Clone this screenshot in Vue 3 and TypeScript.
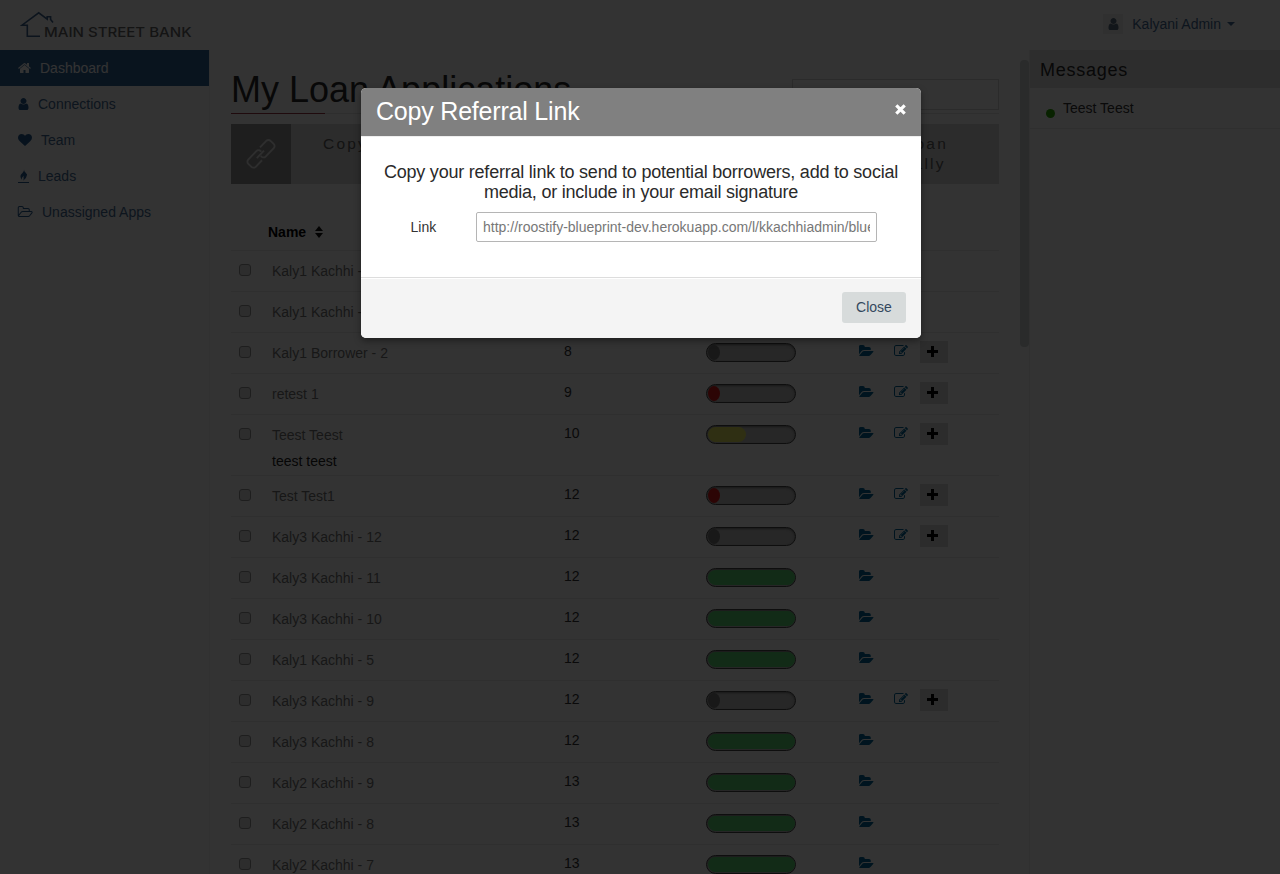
<script setup lang="ts">
interface Loan { name: string; co?: string; days: number; status: 'idle' | 'red' | 'yellow' | 'green' }

const icons = {
  home: 'M1472 992v480q0 26-19 45t-45 19h-384v-384h-256v384h-384q-26 0-45-19t-19-45v-480q0-1 .5-3t.5-3l575-474 575 474q1 2 1 6zm223-69l-62 74q-8 9-21 11h-3q-13 0-21-7l-692-577-692 577q-12 8-24 7-13-2-21-11l-62-74q-8-10-7-23.5t11-21.5l719-599q32-26 76-26t76 26l244 204v-195q0-14 9-23t23-9h192q14 0 23 9t9 23v408l219 182q10 8 11 21.5t-7 23.5z',
  user: 'M1536 1399q0 109-62.5 187t-150.5 78h-854q-88 0-150.5-78t-62.5-187q0-85 8.5-160.5t31.5-152 58.5-131 94-89 134.5-34.5q131 128 313 128t313-128q76 0 134.5 34.5t94 89 58.5 131 31.5 152 8.5 160.5zm-256-887q0 159-112.5 271.5t-271.5 112.5-271.5-112.5-112.5-271.5 112.5-271.5 271.5-112.5 271.5 112.5 112.5 271.5z',
  heart: 'M896 1664q-26 0-44-18l-624-602q-10-8-27.5-26t-55.5-65.5-68-97.5-53.5-121-23.5-138q0-220 127-344t351-124q62 0 126.5 21.5t120 58 95.5 68.5 76 68q36-36 76-68t95.5-68.5 120-58 126.5-21.5q224 0 351 124t127 344q0 221-229 450l-623 600q-18 18-44 18z',
  fire: 'M192 1664H1600V1792H192zM960 40Q940 300 1200 500T1310 850Q1300 1180 850 1500Q960 1280 900 1130Q860 1030 960 860Q720 1000 690 1170Q680 1310 740 1440Q480 1200 500 900Q520 690 760 510T960 40z',
  folderO: 'M1717 931q0-35-53-35h-1088q-40 0-85.5 21.5t-71.5 52.5l-294 363q-18 24-18 40 0 35 53 35h1088q40 0 86-22t71-53l294-363q18-22 18-39zm-1141-163h768v-160q0-40-28-68t-68-28h-576q-40 0-68-28t-28-68v-64q0-40-28-68t-68-28h-320q-40 0-68 28t-28 68v853l256-315q44-53 116-87.5t140-34.5zm1269 163q0 62-46 120l-295 363q-43 53-116 87.5t-140 34.5h-1088q-92 0-158-66t-66-158v-960q0-92 66-158t158-66h320q92 0 158 66t66 158v32h544q92 0 158 66t66 158v160h192q54 0 99 24.5t67 70.5q15 32 15 68z',
  folder: 'M1815 952q0 31-31 66l-336 396q-43 51-120.5 86.5t-143.5 35.5h-1088q-34 0-60.5-13t-26.5-43q0-31 31-66l336-396q43-51 120.5-86.5t143.5-35.5h1088q34 0 60.5 13t26.5 43zm-343-344v160h-832q-94 0-197 47.5t-164 119.5l-337 396-5 6q0-4-.5-12.5t-.5-12.5v-960q0-92 66-158t158-66h320q92 0 158 66t66 158v32h544q92 0 158 66t66 158z',
  edit: 'M888 1184l116-116-152-152-116 116v56h96v96h56zm440-720q-16-16-33 1l-350 350q-17 17-1 33t33-1l350-350q17-17 1-33zm80 594v190q0 119-84.5 203.5t-203.5 84.5h-832q-119 0-203.5-84.5t-84.5-203.5v-832q0-119 84.5-203.5t203.5-84.5h832q63 0 117 25 15 7 18 23 3 17-9 29l-49 49q-14 14-32 8-23-6-45-6h-832q-66 0-113 47t-47 113v832q0 66 47 113t113 47h832q66 0 113-47t47-113v-126q0-13 9-22l64-64q15-15 35-7t20 29zm-96-738l288 288-672 672h-288v-288zm444 132l-92 92-288-288 92-92q28-28 68-28t68 28l152 152q28 28 28 68t-28 68z',
}

const nav = [
  { label: 'Dashboard', icon: icons.home, box: '64 0 1664 1792', w: 13 },
  { label: 'Connections', icon: icons.user, box: '256 0 1280 1792', w: 11 },
  { label: 'Team', icon: icons.heart, box: '0 0 1792 1792', w: 14 },
  { label: 'Leads', icon: icons.fire, box: '192 0 1408 1792', w: 11 },
  { label: 'Unassigned Apps', icon: icons.folderO, box: '0 0 1856 1792', w: 15 },
]

const loans: Loan[] = [
  { name: 'Kaly1 Kachhi - 3', days: 7, status: 'green' },
  { name: 'Kaly1 Kachhi - 4', days: 8, status: 'green' },
  { name: 'Kaly1 Borrower - 2', days: 8, status: 'idle' },
  { name: 'retest 1', days: 9, status: 'red' },
  { name: 'Teest Teest', co: 'teest teest', days: 10, status: 'yellow' },
  { name: 'Test Test1', days: 12, status: 'red' },
  { name: 'Kaly3 Kachhi - 12', days: 12, status: 'idle' },
  { name: 'Kaly3 Kachhi - 11', days: 12, status: 'green' },
  { name: 'Kaly3 Kachhi - 10', days: 12, status: 'green' },
  { name: 'Kaly1 Kachhi - 5', days: 12, status: 'green' },
  { name: 'Kaly3 Kachhi - 9', days: 12, status: 'idle' },
  { name: 'Kaly3 Kachhi - 8', days: 12, status: 'green' },
  { name: 'Kaly2 Kachhi - 9', days: 13, status: 'green' },
  { name: 'Kaly2 Kachhi - 8', days: 13, status: 'green' },
  { name: 'Kaly2 Kachhi - 7', days: 13, status: 'green' },
]
const link = 'http://roostify-blueprint-dev.herokuapp.com/l/kkachhiadmin/blueprint'
</script>

<template>
  <div class="screen">
    <header class="topbar">
      <svg class="logo" width="172" height="30" viewBox="0 0 172 30">
        <path class="house" d="M20 26.2H7.300V15.200H2L18.700 2.800 27.200 9.200V6.800H30.600V9.500L33 12.500" />
        <text x="24" y="27" textLength="147.500" lengthAdjust="spacingAndGlyphs">MAIN STREET BANK</text>
      </svg>
      <div class="account">
        <span class="avatar"><svg width="11" height="14" viewBox="256 0 1280 1792"><path :d="icons.user" /></svg></span>
        <span>Kalyani Admin</span><i class="caret" />
      </div>
    </header>
    <div class="columns">
      <nav class="sidebar">
        <a v-for="(n, i) in nav" :key="n.label" class="item" :class="{ active: i === 0 }">
          <svg :width="n.w" height="14" :viewBox="n.box"><path :d="n.icon" /></svg>
          <span>{{ n.label }}</span>
        </a>
      </nav>
      <main class="main">
        <div class="heading"><h1>My Loan Applications</h1><div class="search" /></div>
        <div class="tiles">
          <div class="tile">
            <div class="square">
              <svg width="26" height="27.700" viewBox="0 0 30 32"><g transform="rotate(-46 15 16)"><path d="M17 14.500V13.500A3.500 3.500 0 0 0 13.500 10H0A3.500 3.500 0 0 0 -3.500 13.500V18.500A3.500 3.500 0 0 0 0 22H10.500M8 16H20M13 17.500V18.500A3.500 3.500 0 0 0 16.500 22H30A3.500 3.500 0 0 0 33.500 18.500V13.500A3.500 3.500 0 0 0 30 10H19.500" /></g></svg>
            </div>
            <span class="label">Copy Referral Link</span>
          </div>
          <div class="tile second"><span class="label">Create a Loan<br>Electronically</span></div>
        </div>
        <div class="thead"><b>Name</b><i class="sort"><i /><i /></i></div>
        <div v-for="l in loans" :key="l.name" class="row">
          <span class="check" />
          <div class="names"><div>{{ l.name }}</div><div v-if="l.co" class="co">{{ l.co }}</div></div>
          <span class="days">{{ l.days }}</span>
          <span class="meter"><i :class="l.status" /></span>
          <div class="actions">
            <svg class="folder" width="15" height="14" viewBox="0 0 1856 1792"><path :d="icons.folder" /></svg>
            <template v-if="l.status !== 'green'">
              <svg class="edit" width="14" height="14" viewBox="0 0 1792 1792"><path :d="icons.edit" /></svg>
              <span class="plus"><svg width="11" height="11" viewBox="0 0 11 11"><path d="M4 0H7V4H11V7H7V11H4V7H0V4H4z" /></svg></span>
            </template>
          </div>
        </div>
        <div class="scrollbar" />
      </main>
      <aside class="messages">
        <h2>Messages</h2>
        <div class="message"><i /><span>Teest Teest</span></div>
      </aside>
    </div>
    <div class="backdrop">
      <section class="modal">
        <div class="modal-head">
          <h3>Copy Referral Link</h3>
          <svg width="11" height="11" viewBox="0 0 11 11"><path d="M1.300 1.300L9.700 9.700M9.700 1.300L1.300 9.700" /></svg>
        </div>
        <div class="modal-body">
          <p>Copy your referral link to send to potential borrowers, add to social<br>media, or include in your email signature</p>
          <div class="field"><label>Link</label><div class="input"><span>{{ link }}</span></div></div>
        </div>
        <div class="modal-foot"><button>Close</button></div>
      </section>
    </div>
  </div>
</template>

<style>
body { margin: 0; }
</style>
<style scoped>
* { box-sizing: border-box; }
.screen { position: relative; width: 1280px; height: 874px; overflow: hidden; background: #fff; font: 14px/20px "Liberation Sans", Arial, sans-serif; color: #333; }
svg { display: block; flex: none; fill: currentColor; }
.topbar { height: 50px; display: flex; justify-content: space-between; padding: 10px 45px 0 20px; }
.logo text { font: 500 12.8px Inter, "Liberation Sans", sans-serif; fill: #666; }
.house { fill: none; stroke: #3f6590; stroke-width: 1.6; }
.account { display: flex; align-items: center; height: 28px; color: #446a94; }
.avatar { width: 20px; height: 20px; display: flex; align-items: center; justify-content: center; background: #efefef; color: #5b6e80; margin-right: 9px; }
.caret { border: 4px solid transparent; border-top-color: #446a94; border-bottom: 0; margin-left: 6px; }
.columns { display: flex; height: 824px; }
.sidebar { width: 210px; border-right: 1px solid #f3f3f3; }
.item { height: 36px; display: flex; align-items: center; gap: 9px; padding-left: 18px; color: #446a94; }
.item svg { overflow: visible; color: #265c92; }
.item.active { background: #2f6598; color: #fff; width: 209px; }
.item.active svg { color: #fff; }
.main { position: relative; width: 819px; padding: 20px 30px 0 21px; }
.heading { height: 44px; border-bottom: 1px solid #e5e5e5; display: flex; justify-content: space-between; position: relative; }
.heading::after { content: ""; position: absolute; left: 0; bottom: -1px; width: 94px; height: 1px; background: #9c3444; }
h1 { margin: 0; font-size: 36px; line-height: 40px; font-weight: 400; color: #2c2c2c; }
.search { width: 207px; height: 31px; margin-top: 9px; border: 1px solid #d8d8d8; }
.tiles { display: flex; margin-top: 10px; height: 60px; }
.tile { width: 384px; display: flex; background: #dcdcdc; color: #606060; letter-spacing: 2.2px; font-size: 15.500px; }
.square { width: 60px; height: 60px; background: #989898; display: flex; align-items: center; justify-content: center; }
.square svg { fill: none; stroke: #e4e4e4; stroke-width: 2.1; overflow: visible; }
.label { padding: 10px 0 0 32px; white-space: nowrap; }
.second { justify-content: flex-end; text-align: center; }
.second .label { padding-right: 51px; }
.thead { height: 67px; border-bottom: 1px solid #e8e8e8; display: flex; padding: 38px 0 0 37px; color: #000; }
.sort { margin: 4px 0 0 9px; display: flex; flex-direction: column; gap: 2px; height: 12px; }
.sort i { border: 4.5px solid transparent; border-bottom: 5px solid #111; border-top: 0; }
.sort i + i { border-top: 5px solid #111; border-bottom: 0; }
.row { display: flex; min-height: 41px; border-bottom: 1px solid #e8e8e8; }
.check { width: 12px; height: 12px; border: 1px solid #969696; border-radius: 3px; background: #e0e0e0; margin: 13px 0 0 8px; }
.names { width: 312px; padding: 10px 0 4px 21px; color: #767676; }
.names .co { color: #222; margin-top: 6px; }
.days { width: 143px; padding: 8px 0 0 1px; color: #333; }
.meter { width: 90px; height: 19px; margin-top: 10px; border: 1px solid #484848; border-radius: 10px; background: #c0c0c0; box-shadow: inset 0 1px 2px #777; padding: 1px .5px; }
.meter i { display: block; height: 15px; width: 12px; border-radius: 50%; background: #777; }
.meter i.red { background: #dc1a1a; }
.meter i.yellow { background: #ecec62; width: 38px; border-radius: 8px; }
.meter i.green { background: #59d873; width: 87px; border-radius: 8px; }
.actions { display: flex; align-items: flex-start; padding-left: 63px; color: #00679a; }
.actions .folder { margin-top: 11px; }
.actions .edit { margin: 11px 0 0 20px; }
.plus { width: 28px; height: 22px; background: #dcdcdc; color: #000; margin: 8px 0 0 12px; padding: 5px 0 0 6.500px; }
.scrollbar { position: absolute; right: 0; top: 10px; width: 9px; height: 287px; border-radius: 4px; background: #cfd6d6; }
.messages { width: 251px; border-left: 1px solid #eee; }
h2 { margin: 0; height: 38px; background: #e0e0e0; font-size: 18px; line-height: 40px; font-weight: 400; letter-spacing: .75px; color: #2c2c2c; padding-left: 10px; }
.message { height: 41px; border-bottom: 1px solid #e8e8e8; display: flex; padding: 10px 0 0 16px; }
.message i { width: 9px; height: 9px; border-radius: 50%; background: #28a800; margin: 11px 8px 0 0; }
.backdrop { position: absolute; inset: 0; background: rgba(0, 0, 0, .8); padding: 88px 0 0 361px; }
.modal { width: 560px; height: 250px; background: #fff; border-radius: 5px; overflow: hidden; box-shadow: 0 3px 7px rgba(0, 0, 0, .4); display: flex; flex-direction: column; }
.modal-head { height: 49px; background: #808080; border-bottom: 1px solid #eee; display: flex; justify-content: space-between; padding: 8px 15px 0; color: #fff; }
h3 { margin: 0; font-size: 25px; line-height: 30px; font-weight: 400; letter-spacing: -.2px; }
.modal-head svg { margin-top: 8px; fill: none; stroke: #fff; stroke-width: 3.2; }
.modal-body { flex: 1; padding: 25px 15px 0; }
p { margin: 0; font-size: 18px; line-height: 20px; letter-spacing: -.22px; text-align: center; white-space: nowrap; color: #2a2a2a; }
.field { display: flex; margin-top: 10px; }
label { width: 100px; padding: 5px 0 0 34.500px; color: #333; }
.input { width: 401px; height: 30px; border: 1px solid #b5b5b5; border-radius: 2px; padding: 4px 6px; color: #777; }
.input span { display: block; overflow: hidden; white-space: nowrap; }
.modal-foot { height: 61px; border-top: 1px solid #ddd; background: #f4f4f4; display: flex; justify-content: flex-end; padding: 14px 15px 0; box-shadow: inset 0 1px 0 #fff; }
button { width: 64px; height: 31px; border: 0; border-radius: 3px; background: #d7dbdb; color: #34495e; font: 14px "Liberation Sans", Arial, sans-serif; padding: 0 0 2px; }
</style>
